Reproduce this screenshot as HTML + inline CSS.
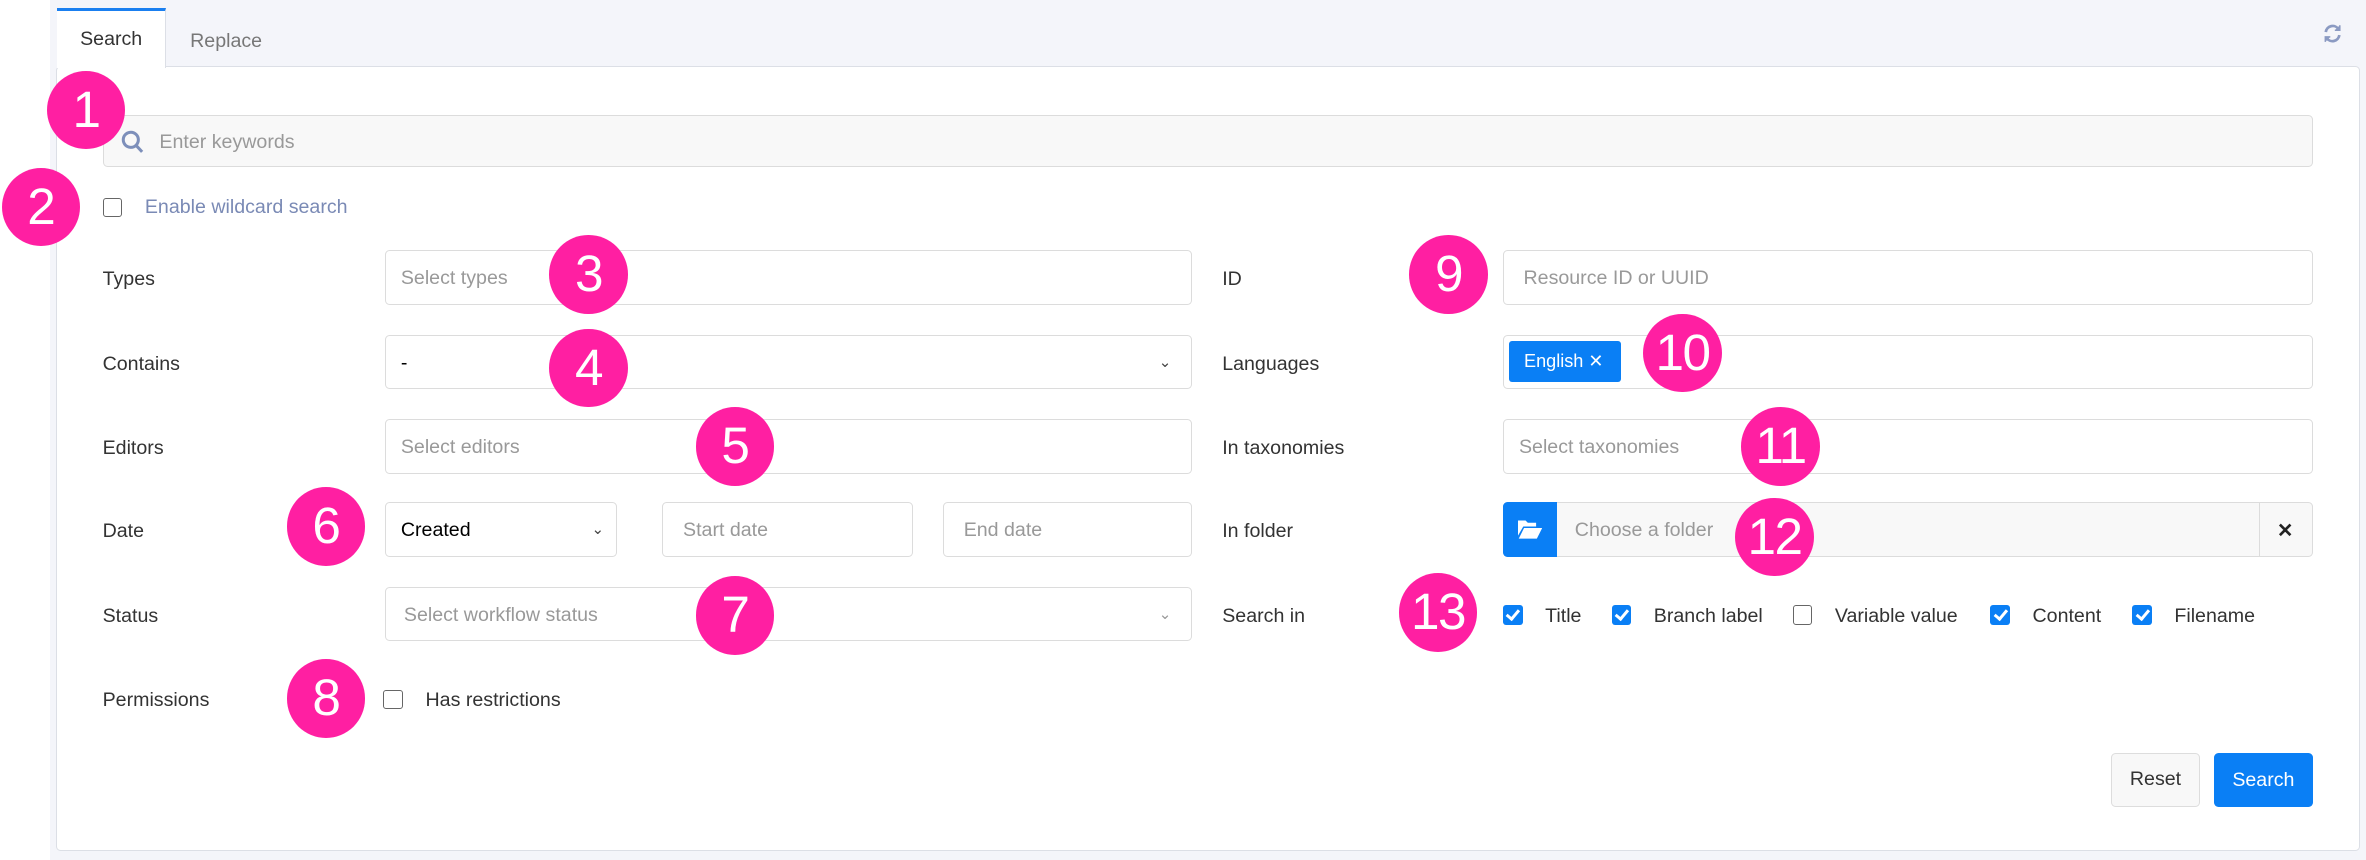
<!DOCTYPE html>
<html><head><meta charset="utf-8"><style>
html,body{margin:0;padding:0;}
body{width:2366px;height:860px;overflow:hidden;background:#fff;font-family:"Liberation Sans",Arial,sans-serif;}
#s{zoom:1.50893;width:1568px;height:570px;position:relative;}
#s *{box-sizing:border-box;}
.a{position:absolute;}
.bg{left:33px;top:0;width:1535px;height:570px;background:#f4f5fa;}
.panel{left:37px;top:44px;width:1527px;height:520px;background:#fff;border:1px solid #dcdfe6;border-radius:3px;}
.tab{top:5px;left:38px;width:72px;height:40px;background:#fff;border-top:2px solid #1a7ff0;border-right:1px solid #dcdfe6;font-size:13px;color:#333;text-align:center;line-height:38px;}
.t{font-size:13px;color:#333;line-height:16px;}
.ph{color:#999;}
.in{border:1px solid #dcdcdc;border-radius:3px;background:#fff;height:36px;font-size:13px;line-height:36px;padding-left:10px;}
.cb{width:13px;height:13px;border:1px solid #666;border-radius:2px;background:#fff;}
.cbk{width:13px;height:13px;border-radius:2px;background:#0a7ff5;}
.cbk:after{content:"";position:absolute;left:4.3px;top:1.6px;width:3px;height:6.5px;border:solid #fff;border-width:0 2px 2px 0;transform:rotate(40deg);}
.n{width:52px;height:52px;border-radius:50%;background:#ff1fa2;color:#fff;font-size:34px;text-align:center;line-height:52px;margin:-26px 0 0 -26px;font-family:"Liberation Sans",Arial,sans-serif;letter-spacing:-1px;}
.chev{font-size:10px;color:#444;}
</style></head><body><div id="s">
<div class="a bg"></div>
<div class="a panel"></div>
<div class="a tab">Search</div>
<div class="a t" style="left:126px;top:19px;color:#777">Replace</div>
<svg class="a" style="left:1539px;top:15px" width="14" height="14" viewBox="0 0 14 14" fill="none" stroke="#8b9ac2" stroke-width="1.8"><path d="M2.5 6A4.6 4.6 0 0 1 11 4.2"/><path d="M11.5 8A4.6 4.6 0 0 1 3 9.8"/><path d="M11.8 1.5V4.8H8.5" fill="#8b9ac2" stroke-width="1"/><path d="M2.2 12.5V9.2H5.5" fill="#8b9ac2" stroke-width="1"/></svg>

<div class="a in" style="left:68px;top:76px;width:1465px;height:35px;background:#f8f8f8;padding-left:37px;line-height:35px"><span class="ph">Enter keywords</span></div>
<svg class="a" style="left:80px;top:86px" width="16" height="17" viewBox="0 0 16 17" fill="none" stroke="#7d8fba" stroke-width="2"><circle cx="6.5" cy="6.5" r="5"/><path d="M10.2 10.4L14 14.5"/></svg>

<div class="a cb" style="left:68px;top:131px"></div>
<div class="a t" style="left:96px;top:129px;color:#7a8ab5">Enable wildcard search</div>

<div class="a t" style="left:68px;top:177px">Types</div>
<div class="a in" style="left:255px;top:166px;width:535px"><span class="ph">Select types</span></div>
<div class="a t" style="left:68px;top:233px">Contains</div>
<div class="a in" style="left:255px;top:222px;width:535px">-<span class="a chev" style="right:13px;top:0">&#8964;</span></div>
<div class="a t" style="left:68px;top:289px">Editors</div>
<div class="a in" style="left:255px;top:278px;width:535px"><span class="ph">Select editors</span></div>
<div class="a t" style="left:68px;top:344px">Date</div>
<div class="a in" style="left:255px;top:333px;width:154px">Created<span class="a chev" style="right:8px;top:0">&#8964;</span></div>
<div class="a in" style="left:439px;top:333px;width:166px;padding-left:13px"><span class="ph">Start date</span></div>
<div class="a in" style="left:625px;top:333px;width:165px;padding-left:13px"><span class="ph">End date</span></div>
<div class="a t" style="left:68px;top:400px">Status</div>
<div class="a in" style="left:255px;top:389px;width:535px;padding-left:12px"><span class="ph">Select workflow status</span><span class="a chev" style="right:13px;top:0;color:#999">&#8964;</span></div>
<div class="a t" style="left:68px;top:456px">Permissions</div>
<div class="a cb" style="left:254px;top:457px"></div>
<div class="a t" style="left:282px;top:456px">Has restrictions</div>

<div class="a t" style="left:810px;top:177px">ID</div>
<div class="a in" style="left:996px;top:166px;width:537px;padding-left:13px"><span class="ph">Resource ID or UUID</span></div>
<div class="a t" style="left:810px;top:233px">Languages</div>
<div class="a in" style="left:996px;top:222px;width:537px"></div>
<div class="a" style="left:1000px;top:226px;width:74px;height:27px;background:#0a7ff5;border-radius:2px;color:#fff;font-size:12px;line-height:27px;padding-left:10px">English &#10005;</div>
<div class="a t" style="left:810px;top:289px">In taxonomies</div>
<div class="a in" style="left:996px;top:278px;width:537px"><span class="ph">Select taxonomies</span></div>
<div class="a t" style="left:810px;top:344px">In folder</div>
<div class="a in" style="left:996px;top:333px;width:537px;background:#f8f8f8;padding-left:47px"><span class="ph">Choose a folder</span></div>
<div class="a" style="left:996px;top:333px;width:36px;height:36px;background:#0a7ff5;border-radius:3px 0 0 3px"></div>
<svg class="a" style="left:1006px;top:344px" width="16" height="13" viewBox="0 0 16 13" fill="#fff"><path d="M0 1h5l1.5 1.5H12V5H3.5L0 11z"/><path d="M4 6h12l-3.5 7H0.5z"/></svg>
<div class="a" style="left:1497px;top:333px;width:1px;height:36px;background:#dcdcdc"></div>
<div class="a" style="left:1509px;top:344px;font-size:13px;font-weight:bold;color:#222">&#10005;</div>
<div class="a t" style="left:810px;top:400px">Search in</div>
<div class="a cbk" style="left:996px;top:401px"></div><div class="a t" style="left:1024px;top:400px">Title</div>
<div class="a cbk" style="left:1068px;top:401px"></div><div class="a t" style="left:1096px;top:400px">Branch label</div>
<div class="a cb" style="left:1188px;top:401px"></div><div class="a t" style="left:1216px;top:400px">Variable value</div>
<div class="a cbk" style="left:1319px;top:401px"></div><div class="a t" style="left:1347px;top:400px">Content</div>
<div class="a cbk" style="left:1413px;top:401px"></div><div class="a t" style="left:1441px;top:400px">Filename</div>

<div class="a" style="left:1399px;top:499px;width:59px;height:36px;border:1px solid #ddd;border-radius:3px;background:#f8f8f8;font-size:13px;color:#333;text-align:center;line-height:34px">Reset</div>
<div class="a" style="left:1467px;top:499px;width:66px;height:36px;border-radius:3px;background:#0a7ff5;font-size:13px;color:#fff;text-align:center;line-height:36px">Search</div>

<div class="a n" style="left:57px;top:73px">1</div>
<div class="a n" style="left:27px;top:137px">2</div>
<div class="a n" style="left:390px;top:182px">3</div>
<div class="a n" style="left:390px;top:244px">4</div>
<div class="a n" style="left:487px;top:296px">5</div>
<div class="a n" style="left:216px;top:349px">6</div>
<div class="a n" style="left:487px;top:408px">7</div>
<div class="a n" style="left:216px;top:463px">8</div>
<div class="a n" style="left:960px;top:182px">9</div>
<div class="a n" style="left:1115px;top:234px">10</div>
<div class="a n" style="left:1180px;top:296px">11</div>
<div class="a n" style="left:1176px;top:356px">12</div>
<div class="a n" style="left:953px;top:406px">13</div>
</div></body></html>
